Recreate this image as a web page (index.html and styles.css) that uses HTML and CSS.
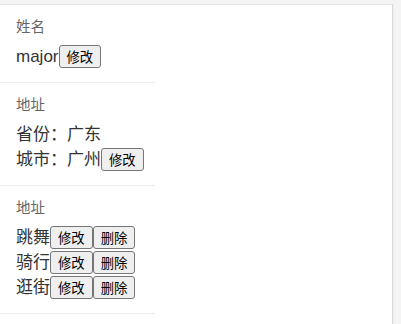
FILE: index.html
```html
<!DOCTYPE html>
<html lang="zh">
<head>
<meta charset="utf-8">
<title>信息</title>
<link rel="stylesheet" href="styles.css">
</head>
<body>
<div class="card">
  <div class="list">
    <div class="item first">
      <div class="label">姓名</div>
      <div class="row"><span class="text">major</span><button class="btn">修改</button></div>
    </div>
    <div class="item">
      <div class="label">地址</div>
      <div class="row"><span class="text">省份：广东</span></div>
      <div class="row"><span class="text">城市：广州</span><button class="btn">修改</button></div>
    </div>
    <div class="item">
      <div class="label">地址</div>
      <div class="row"><span class="text">跳舞</span><button class="btn">修改</button><button class="btn">删除</button></div>
      <div class="row"><span class="text">骑行</span><button class="btn">修改</button><button class="btn">删除</button></div>
      <div class="row"><span class="text">逛街</span><button class="btn">修改</button><button class="btn">删除</button></div>
    </div>
  </div>
</div>
</body>
</html>
```
FILE: styles.css
```css
html, body {
  margin: 0;
  padding: 0;
}
body {
  background: #f3f4f3;
  font-family: "Liberation Sans", "Noto Sans CJK SC", sans-serif;
  height: 324px;
  overflow: hidden;
}
.card {
  margin: 4px 8px 0 0;
  background: #fff;
  border-top: 1px solid #e2e2e2;
  border-right: 1px solid #d9d9d9;
  box-shadow: 1px 0 0 #ececec;
  height: 319px;
  overflow: hidden;
}
.list {
  width: 155px;
}
.item {
  padding: 12px 0 12px 16px;
  border-bottom: 1px solid #ececec;
}
.item.first {
  border-top: 1px solid #ececec;
  margin-top: -1px;
}
.label {
  font-size: 14.5px;
  line-height: 20px;
  color: #666;
  margin-bottom: 8px;
}
.row {
  display: flex;
  align-items: flex-start;
  height: 25px;
  white-space: nowrap;
}
.text {
  font-size: 17px;
  line-height: 23px;
  color: #333;
}
.btn {
  height: 23px;
  margin: 0;
  padding: 0 7px;
  font-family: "Noto Sans CJK SC", sans-serif;
  font-size: 13.33px;
  line-height: 19px;
  color: #000;
  background: #efefef;
  border: 1px solid #767676;
  border-radius: 3px;
}
```
